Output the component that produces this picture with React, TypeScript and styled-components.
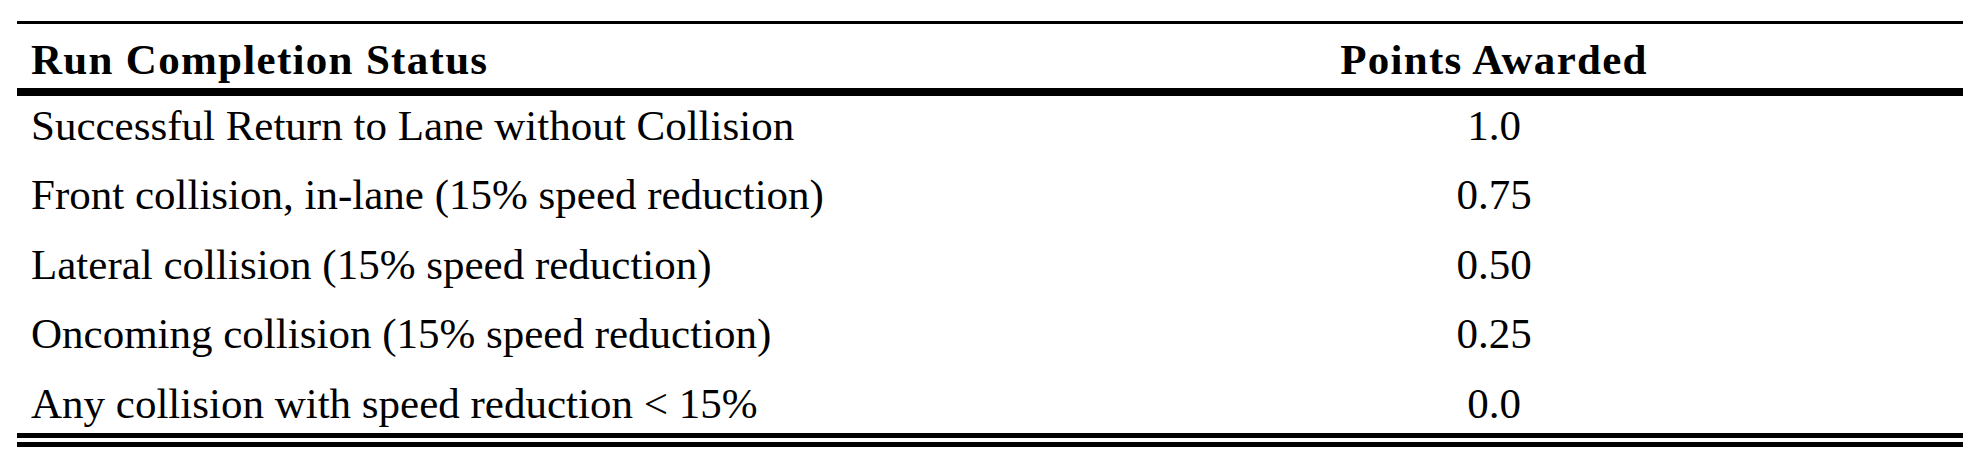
import styled, { createGlobalStyle } from "styled-components";

const GlobalStyle = createGlobalStyle`
    html, body {
        margin: 0;
        padding: 0;
        background: #fff;
    }
    body {
        font-family: "Liberation Serif", "Times New Roman", serif;
        color: #000;
    }
`

const Page = styled.div`
    width: 1976px;
    height: 465px;
    padding: 21px 13px 0 17px;
    box-sizing: border-box;
`

const Table = styled.table`
    width: 1946px;
    table-layout: fixed;
    border-collapse: collapse;
    border-top: 3px solid #000;
    border-bottom: 14px double #000;
    font-size: 43px;
    line-height: 48px;
`

const HeadRow = styled.tr`
    border-bottom: 8px solid #000;
`

const HeadCell = styled.th<{ $center?: boolean }>`
    font-weight: bold;
    letter-spacing: 1.3px;
    text-align: ${(p) => (p.$center ? "center" : "left")};
    padding: 11.5px 0 4.5px ${(p) => (p.$center ? "0" : "14px")};
    white-space: nowrap;
`

const BodyRow = styled.tr`
    &:last-child td {
        padding-bottom: 5.5px;
    }
`

const Cell = styled.td<{ $center?: boolean }>`
    font-weight: normal;
    text-align: ${(p) => (p.$center ? "center" : "left")};
    padding: 5.5px 0 16px ${(p) => (p.$center ? "0" : "14px")};
    white-space: nowrap;
`

const rows = [
    { status: "Successful Return to Lane without Collision", points: "1.0" },
    { status: "Front collision, in-lane (15% speed reduction)", points: "0.75" },
    { status: "Lateral collision (15% speed reduction)", points: "0.50" },
    { status: "Oncoming collision (15% speed reduction)", points: "0.25" },
    { status: "Any collision with speed reduction < 15%", points: "0.0" },
]

export default function App() {
    return (
        <>
            <GlobalStyle />
            <Page>
                <Table>
                    <colgroup>
                        <col style={{ width: "1008px" }} />
                        <col />
                    </colgroup>
                    <thead>
                        <HeadRow>
                            <HeadCell>Run Completion Status</HeadCell>
                            <HeadCell $center>Points Awarded</HeadCell>
                        </HeadRow>
                    </thead>
                    <tbody>
                        {rows.map((r) => (
                            <BodyRow key={r.status}>
                                <Cell>{r.status}</Cell>
                                <Cell $center>{r.points}</Cell>
                            </BodyRow>
                        ))}
                    </tbody>
                </Table>
            </Page>
        </>
    )
}
